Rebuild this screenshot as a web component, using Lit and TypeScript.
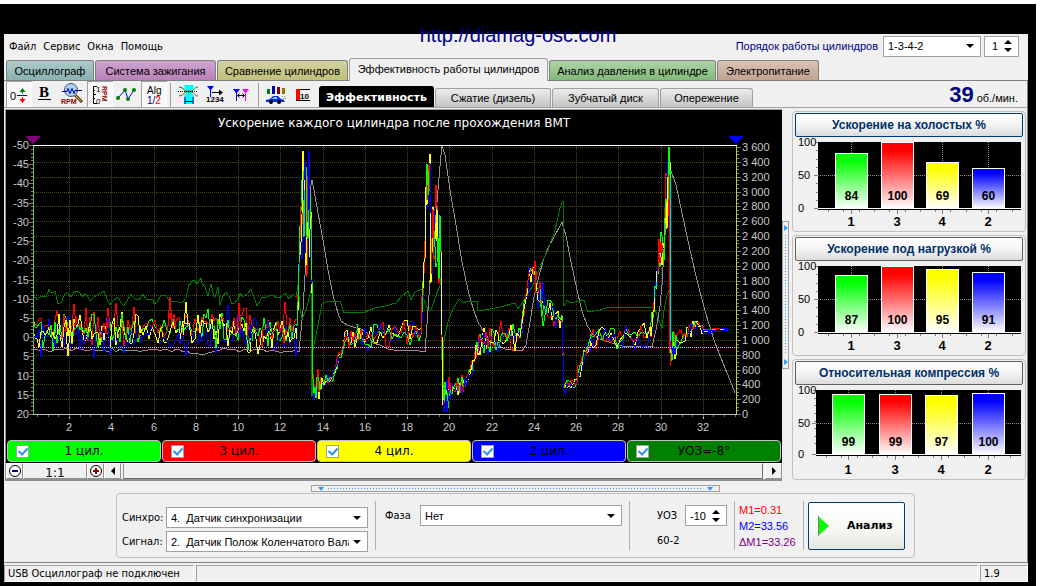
import { LitElement, html, svg, css } from "lit";
import { customElement, property, state } from "lit/decorators.js";
import { classMap } from "lit/directives/class-map.js";

type Pt = [number, number];

/* ---------- chart geometry ---------- */
const TOP = 145;
const BOTTOM = 414;
const xOf = (v: number) => Math.round(69 + (v - 2) * 21.13);
const yLeft = (v: number) => Math.round(TOP + ((v + 50) * (BOTTOM - TOP)) / 70);
const yRight = (v: number) => Math.round(BOTTOM - (v / 200) * 14.83);

const range = (from: number, to: number, step: number) => {
  const out: number[] = [];
  for (let v = from; v <= to; v += step) out.push(v);
  return out;
};

function random(seed: number) {
  let s = seed;
  return () => {
    s = (s * 1664525 + 1013904223) % 4294967296;
    return s / 4294967296;
  };
}

/* Section of a cylinder trace: x from, x to, y at start, y at end, ripple, spacing */
type Section = [number, number, number, number, number, number];
const cylinder: Section[] = [
  [33, 60, 331, 331, 15, 2],
  [60, 140, 330, 330, 17, 2],
  [140, 180, 332, 331, 10, 3],
  [180, 200, 330, 327, 12, 3],
  [200, 262, 328, 331, 16, 2],
  [262, 296, 335, 334, 14, 2],
  [297, 300, 325, 240, 12, 1],
  [301, 311, 205, 215, 48, 1],
  [312, 313, 285, 380, 8, 1],
  [314, 321, 386, 385, 11, 1],
  [322, 332, 383, 378, 5, 2],
  [333, 344, 374, 345, 7, 2],
  [345, 362, 338, 336, 10, 2],
  [362, 420, 338, 331, 11, 3],
  [421, 425, 330, 250, 14, 1],
  [426, 430, 195, 175, 18, 1],
  [431, 440, 242, 235, 42, 1],
  [441, 442, 250, 340, 8, 1],
  [443, 452, 396, 390, 14, 1],
  [453, 465, 388, 384, 7, 1],
  [466, 471, 380, 372, 4, 2],
  [472, 479, 365, 345, 8, 1],
  [480, 498, 341, 337, 13, 2],
  [499, 519, 336, 338, 11, 2],
  [520, 528, 336, 288, 8, 2],
  [529, 535, 276, 270, 9, 2],
  [536, 545, 288, 303, 14, 2],
  [546, 562, 312, 324, 12, 2],
  [563, 564, 350, 386, 4, 1],
  [565, 577, 386, 381, 5, 2],
  [578, 590, 374, 344, 8, 2],
  [590, 650, 338, 334, 11, 3],
  [651, 658, 332, 270, 10, 1],
  [659, 664, 252, 248, 14, 1],
  [665, 668, 210, 195, 34, 1],
  [669, 670, 178, 174, 16, 1],
  [671, 676, 347, 347, 16, 1],
  [677, 697, 340, 325, 7, 2],
  [698, 703, 325, 330, 4, 2],
  [704, 730, 331, 329, 1, 4],
];

function cylinderTrace(seed: number, bias: number): Pt[] {
  const rnd = random(seed);
  const pts: Pt[] = [];
  for (const [x0, x1, y0, y1, ripple, step] of cylinder) {
    const quiet = ripple > 9 && ripple < 18 && x1 < 300 ? bias : bias / 4;
    for (let x = x0; x <= x1; x += step) {
      const t = x1 === x0 ? 0 : (x - x0) / (x1 - x0);
      const swing = (rnd() + rnd() - 1) * ripple * 1.45;
      pts.push([x, Math.round(y0 + (y1 - y0) * t + swing + quiet)]);
    }
  }
  return pts;
}

const join = (pts: Pt[]) => pts.map((p) => p.join(",")).join(" ");

function ripplePath(seed: number, amp: number, until: number, nodes: Pt[]): string {
  const rnd = random(seed);
  const pts: Pt[] = [];
  nodes.forEach(([x, y], i) => {
    pts.push([x, y]);
    const next = nodes[i + 1];
    if (next && x < until) {
      for (let k = x + 3; k < Math.min(next[0], until); k += 4) {
        const t = (k - x) / (next[0] - x);
        pts.push([k, Math.round(y + (next[1] - y) * t + (rnd() - 0.5) * amp)]);
      }
    }
  });
  return join(pts);
}

const speedTrace = ripplePath(5, 4, 299, [
  [33, 350], [180, 350], [190, 353], [205, 354], [220, 350], [299, 352], [303, 310], [305, 275],
  [307, 235], [309, 210], [311, 185], [312, 180], [314, 190], [318, 213], [323, 240], [328, 270],
  [333, 295], [338, 313], [341, 321], [347, 325], [353, 327], [361, 329], [367, 333], [373, 343],
  [380, 345], [388, 349], [400, 351], [412, 350], [425, 352], [428, 310], [430, 280], [432, 250],
  [436, 215], [438, 190], [441, 155], [442, 146], [445, 155], [450, 190], [456, 225], [462, 262],
  [468, 290], [473, 308], [478, 322], [484, 332], [490, 341], [496, 345], [505, 349], [522, 351],
  [526, 345], [530, 322], [534, 297], [538, 280], [543, 261], [548, 248], [554, 237], [560, 226],
  [562, 222], [566, 236], [571, 262], [577, 290], [582, 311], [587, 325], [593, 335], [600, 339],
  [612, 343], [625, 347], [640, 346], [652, 347], [656, 330], [660, 306], [662, 285], [664, 250],
  [667, 205], [669, 165], [676, 185], [685, 227], [695, 272], [705, 311], [715, 343], [725, 368],
  [730, 380], [735, 393],
]);

const angleTrace = ripplePath(11, 9, 296, [
  [33, 297], [37, 300], [46, 297], [50, 292], [55, 291], [58, 304], [64, 296], [84, 294], [90, 301],
  [104, 291], [110, 305], [118, 297], [124, 306], [132, 296], [146, 299], [154, 304], [166, 295],
  [175, 301], [186, 298], [190, 285], [194, 280], [202, 283], [208, 296], [211, 284], [215, 297],
  [218, 287], [220, 305], [226, 292], [232, 304], [240, 293], [252, 292], [257, 306], [262, 297],
  [296, 297], [298, 285], [300, 308], [302, 319], [306, 310], [309, 298], [311, 290], [312, 397],
  [313, 350], [315, 340], [319, 320], [322, 304], [326, 302], [340, 301], [344, 313], [365, 312],
  [375, 308], [385, 306], [396, 303], [402, 296], [408, 291], [411, 300], [415, 292], [422, 289],
  [424, 300], [428, 310], [431, 310], [436, 296], [440, 285], [441, 278], [442, 360], [443, 395],
  [444, 340], [448, 322], [453, 309], [459, 299], [463, 303], [468, 301], [477, 301], [478, 311],
  [490, 309], [500, 307], [515, 303], [518, 309], [525, 299], [533, 285], [537, 275], [542, 262],
  [548, 250], [555, 230], [560, 208], [563, 201], [564, 306], [567, 300], [571, 303], [584, 300],
  [588, 312], [600, 310], [610, 307], [654, 307], [658, 318], [662, 328], [664, 310], [667, 295],
  [670, 288], [671, 350],
]);

/* Single bursts that rise above the general ripple of each cylinder */
interface Trace { color: string; points: string; }
const bursts: Trace[] = [
  { color: "#ff0000", points: "72,325 74,304 76,326" },
  { color: "#ff0000", points: "106,326 108,308 110,326" },
  { color: "#ff0000", points: "168,326 170,297 172,322 174,314 176,330" },
  { color: "#ff0000", points: "237,330 239,303 241,330" },
  { color: "#ff0000", points: "283,326 285,302 287,326" },
  { color: "#ffff00", points: "183,335 186,302 188,325" },
  { color: "#0000ff", points: "225,330 228,305 230,326" },
  { color: "#0000ff", points: "183,335 186,356 189,340" },
  { color: "#ffff00", points: "66,332 68,356 70,330" },
  { color: "#00ff00", points: "302,190 304,170 306,200" },
  { color: "#ffff00", points: "302,210 303,151 305,190" },
  { color: "#0000ff", points: "303,200 305,160 306,240" },
  { color: "#ff0000", points: "427,200 429,165 430,190" },
  { color: "#00ff00", points: "426,200 428,170 429,195" },
  { color: "#0000ff", points: "443,400 444,412 446,395 447,412 449,390" },
  { color: "#ff0000", points: "533,275 535,261 537,280" },
  { color: "#00ff00", points: "540,298 543,326 546,310" },
  { color: "#0000ff", points: "541,300 543,282 545,306" },
  { color: "#ff0000", points: "668,180 669,155 669,340 671,366" },
  { color: "#00ff00", points: "668,200 669,147 670,175" },
  { color: "#0000ff", points: "671,180 671,350" },
  { color: "#0000ff", points: "704,331 716,330 724,328 731,330" },
];

/* Cylinder traces are cut into short runs so that no colour hides the others */
function interleaved(): Trace[] {
  const rnd = random(99);
  const runs: (Trace & { order: number })[] = [];
  const sources: [string, Pt[]][] = [
    ["#00ff00", cylinderTrace(31, -1)],
    ["#ff0000", cylinderTrace(77, -6)],
    ["#0000ff", cylinderTrace(512, 5)],
    ["#ffff00", cylinderTrace(2024, 1)],
  ];
  for (const [color, pts] of sources) {
    let i = 0;
    while (i < pts.length - 1) {
      const n = 2 + Math.floor(rnd() * 4);
      runs.push({ color, points: join(pts.slice(i, i + n + 1)), order: rnd() });
      i += n;
    }
  }
  return runs.sort((a, b) => a.order - b.order);
}

const traces: Trace[] = [
  ...interleaved(),
  ...bursts,
];

/* ---------- toolbar pictures ---------- */
const icons = {
  offset: svg`
    <text class="i11" x="4" y="19">0</text>
    <path d="M11 14.5H21" stroke="#0000c0" />
    <path d="M16.5 13V9" stroke="#008000" /><path d="M13.5 11h6l-3-4z" fill="#008000" />
    <path d="M16.5 16v4" stroke="#f00" /><path d="M13.5 18h6l-3 4z" fill="#f00" />`,
  bold: svg`
    <text class="bserif" x="6" y="16">B</text>
    <path d="M5 18.5H18" stroke="#000" />`,
  magnifier: svg`
    <path d="M15 14l7 7" stroke="#604010" stroke-width="3" />
    <path d="M15 14l6 6" stroke="#e0b040" />
    <circle cx="11" cy="9" r="6.5" fill="#a8d0f8" stroke="#505860" />
    <path d="M2 10.5h5l1-3 2 5 2-5 2 5 1-3h7" fill="none" stroke="#000090" />
    <text class="rpm" x="1" y="23">RPM</text>`,
  scale: svg`
    <path d="M10 5.5H6.500V22.500H10M6 9.500h2M6 13.500h3M6 17.500h2" fill="none" stroke="#000" />
    <text class="i8" x="9" y="11">1</text><text class="i8" x="9" y="23">0</text>
    <text class="rpm" transform="translate(15 5) rotate(90)" x="0" y="0">RPM</text>`,
  points: svg`
    <path d="M4 17L11 9L14 18L20 9" fill="none" stroke="#0000ff" />
    <g fill="#008000"><circle cx="4" cy="17" r="2" /><circle cx="11" cy="9" r="2" /><circle cx="14" cy="18" r="2" /><circle cx="20" cy="9" r="2" /></g>`,
  algorithm: svg`
    <text class="i10" x="6" y="13">Alg</text>
    <text class="i10" x="6" y="23"><tspan fill="#000080">1/</tspan><tspan fill="#f00">2</tspan></text>`,
  goblet: svg`
    <path d="M9 4h10l-2 8 2 3v8H9v-8l2-3z" fill="#00ffff" />
    <path d="M4 6c5 0 5 5 10 5s5-5 9-5" fill="none" stroke="#008000" />
    <path d="M4 15c5 0 5-5 10-5s5 5 9 5" fill="none" stroke="#c04000" />
    <path d="M3 10.5h20" stroke="#000" stroke-dasharray="1 1" />
    <path d="M10 16v7M18 16v7M10 20.500h8" fill="none" stroke="#0000a0" />`,
  markerNumbers: svg`
    <path d="M5 5h7l-3 4v7h-1v-7z" fill="#0000ff" />
    <path d="M10 11.500h8" stroke="#000" /><path d="M17 8.500l4 3-4 3z" fill="#000" />
    <text class="i8b" x="4" y="21">1234</text>`,
  markerPair: svg`
    <path d="M4 8h7l-3 4v8h-1v-8z" fill="#0000ff" />
    <path d="M13 8h7l-3 4v8h-1v-8z" fill="#ff00ff" />
    <path d="M9 14.500h6M10.500 12.500l-2 2 2 2M13.500 12.500l2 2-2 2" fill="none" stroke="#000" />`,
  carBars: svg`
    <path d="M4 8h3v5H4z" fill="#008000" /><path d="M9 5h3v8H9z" fill="#0000c0" />
    <path d="M14 6h3v7h-3z" fill="#900000" /><path d="M19 7h3v6h-3z" fill="#808000" />
    <path d="M3 19l4-1 3-3h5l3 3 3 1v2H3z" fill="#0030e0" />
    <path d="M9 18l2-2h3v2z" fill="#90d0ff" />
    <circle cx="8" cy="21" r="2" fill="#000" /><circle cx="16" cy="21" r="2" fill="#000" />
    <path d="M19 15.500h4M20 17.500h3M21 20.500h2" stroke="#909090" stroke-dasharray="1 1" />`,
  barTen: svg`
    <path d="M6 8h4v11H6z" fill="#ff0000" /><path d="M10 8.500h10M6 19.500h14" stroke="#000" />
    <text class="i8b" x="10" y="18">10</text>`,
};

@customElement("tool-button")
export class ToolButton extends LitElement {
  @property() icon: keyof typeof icons = "offset";
  @property() name = "";
  @property({ type: Boolean }) pressed = false;

  static styles = css`
    :host { display: block; width: 26px; height: 26px; margin-right: 1px; }
    button { display: block; width: 26px; height: 26px; padding: 0; border: 0; background: none; }
    .pressed {
      background: repeating-conic-gradient(#fff 0 25%, #f0f0f0 0 50%) 0 0 / 2px 2px;
      box-shadow: inset 1px 1px 0 #a0a0a0, inset -1px -1px 0 #fff;
    }
    svg { display: block; width: 26px; height: 26px; }
    text { font-family: "Liberation Sans", sans-serif; }
    .i11 { font-size: 11px; }
    .i10 { font-size: 10px; }
    .i8 { font-size: 8px; }
    .i8b { font-size: 8px; font-weight: bold; }
    .rpm { font-size: 7px; font-weight: bold; fill: #900000; }
    .bserif { font: bold 15px "Liberation Serif", serif; }
  `;

  render() {
    return html`<button
      class=${classMap({ pressed: this.pressed })}
      aria-label=${this.name}
      aria-pressed=${this.pressed ? "true" : "false"}
      @click=${() => (this.pressed = !this.pressed)}
    ><svg viewBox="0 0 26 26" aria-hidden="true">${icons[this.icon]}</svg></button>`;
  }
}

/* ---------- bar card ---------- */
interface Bar { id: string; value: number; color: string; }

@customElement("bar-card")
export class BarCard extends LitElement {
  @property() heading = "";
  @property({ type: Boolean }) current = false;
  @property({ attribute: false }) bars: Bar[] = [];
  @property({ type: Number }) origin = 23;
  @property({ type: Number }) floor = 70;

  static styles = css`
    :host { display: block; border: 1px solid #c0c0c0; border-radius: 4px; padding: 1px 2px; }
    button {
      display: block; width: 100%; height: 24px; padding: 0; border: 1px solid #606060; border-radius: 2px;
      background: linear-gradient(#fff, #f4f4f4 50%, #dcdcdc);
      font: bold 12px "Liberation Sans", sans-serif; color: #003068;
    }
    .current { border-color: #003c74; }
    svg { display: block; width: 100%; height: auto; overflow: visible; }
    text { font-family: "Liberation Sans", sans-serif; }
    .tick { font-size: 11px; fill: #000; }
    .num { font-size: 12px; font-weight: bold; text-anchor: middle; }
    .id { font-size: 13px; font-weight: bold; text-anchor: middle; }
    .crisp { shape-rendering: crispEdges; }
  `;

  render() {
    const x0 = this.origin;
    const base = this.floor;
    const full = base === 70 ? 66 : 61;
    const step = (226 - x0) / (base === 70 ? 4.45 : 4.39);
    const cx = (i: number) => Math.round(193 - step * (3 - i));
    const mid = base - 33 + (base === 70 ? 0 : 2);
    return html`
      <button class=${classMap({ current: this.current })}>${this.heading}</button>
      <svg viewBox="0 -1 228 93" role="img" aria-label=${this.heading}>
        <defs>
          ${this.bars.map((b) => svg`<linearGradient id="g${b.id}" x1="0" y1="0" x2="0" y2="1">
            <stop offset="0.12" stop-color=${b.color} /><stop offset="1" stop-color="#fff" /></linearGradient>`)}
        </defs>
        <g class="crisp">
          <rect x=${x0} y="4" width=${226 - x0} height=${base - 2} fill="#000" />
          <path d="M${x0 - 3} 4.500h3M${x0 - 4} ${mid + 0.5}h4M${x0 - 4} ${base + 0.5}h4" stroke="#808080" />
          ${range(1, 7, 1).map((i) => svg`<path d="M${x0 - 2} ${Math.round(4 + (i * full) / 8) + 0.5}h2" stroke="#808080" />`)}
          ${range(0, 12, 1).map((i) => svg`<path d="M${Math.round(x0 + 10 + i * 15.3) + 0.5} ${base + 2}v2" stroke="#808080" />`)}
          <path d="M${x0} ${mid + 0.5}H226" stroke="#909090" stroke-dasharray="1 1" />
          ${this.bars.map((b, i) => svg`
            <path d="M${cx(i) + 0.5} 4V${base}" stroke="#909090" stroke-dasharray="1 1" />
            <path d="M${cx(i) + 0.5} ${base + 2}v4" stroke="#808080" />
            <rect x=${cx(i) - 15.5} y=${base - Math.round((b.value * full) / 100) + 0.5} width="32"
              height=${Math.round((b.value * full) / 100)} fill="url(#g${b.id})" stroke="#fff" />`)}
          <path d="M${x0} ${base + 0.5}H226" stroke="#fff" />
        </g>
        ${this.bars.map((b, i) => svg`
          <text class="num" x=${cx(i) + 0.5} y=${base - 8}>${b.value}</text>
          <text class="id" x=${cx(i)} y="88">${b.id}</text>`)}
        <text class="tick" x="3" y="8">100</text>
        <text class="tick" x="3" y=${mid + 4}>50</text>
        <text class="tick" x="3" y=${base + 4}>0</text>
      </svg>`;
  }
}

/* ---------- oscillogram ---------- */
@customElement("scope-chart")
export class ScopeChart extends LitElement {
  static styles = css`
    :host { display: block; background: #000; }
    svg { display: block; width: 100%; height: auto; }
    text { font-family: "Liberation Sans", sans-serif; font-size: 11px; fill: #c8c8c8; }
    .title { font-family: "DejaVu Sans", sans-serif; font-size: 12px; fill: #fff; text-anchor: middle; }
    .end { text-anchor: end; }
    .mid { text-anchor: middle; font-size: 11px; }
    .crisp { shape-rendering: crispEdges; fill: none; }
  `;

  render() {
    return html`<svg viewBox="6 110 776 330" role="img" aria-label="Ускорение каждого цилиндра">
      <text class="title" x="394" y="127">Ускорение каждого цилиндра после прохождения ВМТ</text>
      <g class="crisp">
        ${range(200, 3600, 200).map((v) => svg`<path d="M34 ${yRight(v) + 0.5}H736" stroke="#4a4a10" stroke-dasharray="1 1" />`)}
        ${range(2, 32, 2).map((v) => svg`<path d="M${xOf(v) + 0.5} 146V414" stroke="#4a4a10" stroke-dasharray="1 1" />
          <path d="M${xOf(v) + 0.5} 414v5" stroke="#c0c0c0" />`)}
        ${range(0.5, 33.5, 0.5).map((v) => svg`<path d="M${xOf(v) + 0.5} 414v3" stroke="#707070" />`)}
        ${range(-50, 20, 1).map((v) => svg`<path d="M${v % 5 ? 31 : 29} ${yLeft(v) + 0.5}H33" stroke="#808080" />`)}
        ${range(0, 3600, 50).map((v) => svg`<path d="M737 ${yRight(v) + 0.5}h${v % 200 ? 2 : 4}" stroke="#808080" />`)}
        <polyline points=${speedTrace} stroke="#909090" />
        <polyline points=${angleTrace} stroke="#007a00" />
        ${traces.map((t) => svg`<polyline points=${t.points} stroke=${t.color} />`)}
        <path d="M34 347.500H736" stroke="#40ffff" stroke-dasharray="1 1" />
        <path d="M33 145.500H737" stroke="#fff" />
        <path d="M33 414.500H737" stroke="#c0c0c0" />
        <path d="M33.500 146V414" stroke="#60c060" />
        <path d="M736.500 146V414" stroke="#c8c840" />
      </g>
      <path d="M25 136h16l-8 8z" fill="#800080" />
      <path d="M728 136h16l-8 8z" fill="#0000ff" />
      ${range(-50, 20, 5).map((v) => svg`<text class="end" x="29" y=${yLeft(v) + 4}>${v}</text>`)}
      ${range(0, 3600, 200).map((v) => svg`<text x="742" y=${yRight(v) + 4}>${v < 1000 ? v : `${Math.floor(v / 1000)} ${String(v % 1000).padStart(3, "0")}`}</text>`)}
      ${range(2, 32, 2).map((v) => svg`<text class="mid" x=${xOf(v)} y="431">${v}</text>`)}
    </svg>`;
  }
}

/* ---------- application ---------- */
const downArrow = html`<svg class="arrow" viewBox="0 0 16 16" aria-hidden="true"><path d="M4 6h8l-4 4z" /></svg>`;
const spinArrows = html`<svg class="arrow" viewBox="0 0 16 16" aria-hidden="true"><path d="M4 6h8L8 2zM4 10h8l-4 4z" /></svg>`;

@customElement("app-root")
export class AppRoot extends LitElement {
  @state() private tab = 3;
  @state() private mode = 0;

  private tabs = ["Осциллограф", "Система зажигания", "Сравнение цилиндров", "Эффективность работы цилиндров", "Анализ давления в цилиндре", "Электропитание"];
  private modes = ["Эффективность", "Сжатие (дизель)", "Зубчатый диск", "Опережение"];
  private channels = [
    { text: "1 цил.", tone: "green" },
    { text: "3 цил.", tone: "red" },
    { text: "4 цил.", tone: "yellow" },
    { text: "2 цил.", tone: "blue" },
    { text: "УОЗ=-8°", tone: "dark" },
  ];

  private bars(a: number, b: number, c: number, d: number): Bar[] {
    return [
      { id: "1", value: a, color: "#00ff00" },
      { id: "3", value: b, color: "#ff0000" },
      { id: "4", value: c, color: "#ffff00" },
      { id: "2", value: d, color: "#0000ff" },
    ];
  }

  static styles = css`
    :host {
      display: flex; flex-direction: column; box-sizing: border-box; min-height: 100vh;
      padding: 4px 4px 0 0; background: #fff; color: #000;
      font: 11px "DejaVu Sans Condensed", "DejaVu Sans", sans-serif;
    }
    * { box-sizing: border-box; }
    button, input, select { font: inherit; color: inherit; margin: 0; }
    .frame { flex: 1; display: flex; flex-direction: column; background: #000; padding: 30px 8px 4px 4px; }
    .window { flex: 1; display: flex; flex-direction: column; background: #f0f0f0; position: relative; }
    .ms { font: 11px "Liberation Sans", sans-serif; }

    .head { display: flex; align-items: center; height: 24px; padding: 0 9px 0 5px; }
    .menu { display: flex; gap: 7px; flex: 1; }
    .menu button { border: 0; background: none; padding: 0; }
    .site {
      position: absolute; top: -11px; left: 0; right: 0; margin: 0 auto; width: max-content; padding-left: 4px;
      font: 20px/24px "Liberation Sans", sans-serif; color: #000080; text-decoration: none;
    }
    .order { color: #000080; margin-right: 5px; }
    .field { display: grid; background: #fff; border: 1px solid #a0a0a0; height: 21px; align-items: center; }
    .field > * { grid-area: 1 / 1; }
    .field select, .field input {
      appearance: none; -moz-appearance: textfield; border: 0; background: none; outline: 0;
      width: 100%; height: 19px; padding: 0 18px 0 4px; min-width: 0;
    }
    input::-webkit-inner-spin-button { appearance: none; }
    .arrow { width: 16px; height: 16px; justify-self: end; margin-right: 2px; pointer-events: none; }
    .cyl { width: 98px; margin-right: 3px; }
    .num { width: 35px; }
    .num input { padding: 0 0 0 7px; }

    .tabs { display: flex; align-items: flex-end; gap: 1px; height: 23px; padding-left: 2px; border-bottom: 1px solid #808080; }
    .tab {
      height: 20px; padding: 0; border: 1px solid #808080; border-bottom: 0; border-radius: 3px 3px 0 0;
      text-align: center; white-space: nowrap;
    }
    .tab.active { height: 23px; margin-bottom: -1px; background: #f0f0f0; border-color: #a0a0a0; padding-bottom: 3px; }
    .t0 { width: 88px; background: linear-gradient(#abcac8, #88b1b1); }
    .t1 { width: 121px; background: linear-gradient(#cda4cf, #b980b9); }
    .t2 { width: 131px; background: linear-gradient(#d2d2a2, #c0c078); }
    .t3 { width: 199px; background: #e0e0e0; }
    .t4 { width: 167px; background: linear-gradient(#aed4a8, #80ba78); }
    .t5 { width: 102px; background: linear-gradient(#d9c3b5, #c3a28f); }

    .page { flex: 1; display: flex; flex-direction: column; border-right: 1px solid #808080; border-bottom: 1px solid #808080; }
    .tools { display: flex; height: 27px; padding-left: 2px; border-bottom: 1px solid #a0a0a0; }
    .sep { width: 1px; height: 24px; margin: 2px 4px 0 2px; background: #a0a0a0; }
    .modes { display: flex; align-items: flex-end; gap: 1px; margin-left: 2px; flex: 1; }
    .mode {
      height: 19px; padding: 0; border: 1px solid #a0a0a0; border-bottom: 0; border-radius: 3px 3px 0 0;
      background: linear-gradient(#ececec, #c4c4c4); white-space: nowrap;
    }
    .mode.active { height: 21px; background: #000; color: #fff; border-color: #000; font: bold 11px "DejaVu Sans", sans-serif; }
    .m0 { width: 115px; } .m1 { width: 116px; } .m2 { width: 107px; } .m3 { width: 93px; }
    .speed { display: flex; align-items: baseline; gap: 3px; padding-right: 9px; }
    .speed b { font: bold 22px/27px "Liberation Sans", sans-serif; color: #000080; }

    .main { display: grid; grid-template-columns: minmax(0, 1fr) 10px 234px; align-items: start; padding: 1px 1px 0 1px; }
    .scope { border-left: 1px solid #909090; border-top: 1px solid #a0a0a0; background: #000; }
    .legend { display: grid; grid-template-columns: repeat(5, minmax(0, 1fr)); gap: 1px; padding: 0 1px; margin-bottom: 1px; }
    .channel {
      display: grid; grid-template-columns: 13px 1fr 13px; align-items: center; height: 22px; padding: 0 8px;
      border: 1px solid #c0c0c0; border-radius: 4px; text-align: center; font: 12px "DejaVu Sans", sans-serif;
    }
    .green { background: #00ff00; } .red { background: #ff0000; } .yellow { background: #ffff00; }
    .blue { background: #0000ff; } .dark { background: #008000; }
    .channel input { appearance: none; width: 13px; height: 13px; background: #fff; border: 1px solid #a0a0a0; display: grid; }
    .channel input:checked::before {
      content: ""; width: 4px; height: 7px; margin: 0 0 0 3px; border: solid #3090f0; border-width: 0 2px 2px 0; transform: rotate(42deg);
    }
    .scroll { display: flex; height: 18px; background: #f0f0f0; border-bottom: 2px solid #909090; }
    .scroll button, .zoom {
      height: 16px; padding: 0; background: #f0f0f0; border: 1px solid; border-color: #fff #909090 #909090 #fff;
    }
    .scroll button { width: 17px; display: grid; place-items: center; }
    .scroll button svg { width: 14px; height: 14px; }
    .zoom { width: 64px; text-align: center; font: 12px/18px "DejaVu Sans", sans-serif; }
    .track { flex: 1; margin: 0 2px; border: 1px solid; border-color: #fff #707070 #707070 #909090; }
    .side { display: flex; align-items: center; align-self: stretch; }
    .vgrip {
      width: 7px; height: 148px; padding: 3px 0; border: 1px solid #a0a0a0; background: #f0f0f0;
      display: flex; flex-direction: column; align-items: center; justify-content: space-between;
    }
    .vgrip i { flex: 1; width: 1px; margin: 4px 0; background: repeating-linear-gradient(#3399ff 0 1px, transparent 1px 3px); }
    .vgrip svg { width: 4px; height: 6px; }
    .cards { display: flex; flex-direction: column; gap: 3px; padding-top: 2px; }

    .hgrip {
      width: 409px; height: 7px; margin: 4px auto 1px; padding: 0 6px; border: 1px solid #a0a0a0; background: #f0f0f0;
      display: flex; align-items: center;
    }
    .hgrip i { flex: 1; height: 1px; margin: 0 4px; background: repeating-linear-gradient(90deg, #3399ff 0 1px, transparent 1px 3px); }
    .hgrip svg { width: 6px; height: 4px; }
    .controls {
      display: flex; align-items: center; align-self: center; height: 65px; padding: 0 9px 0 5px;
      border: 1px solid #c0c0c0; border-radius: 4px;
    }
    .line { width: 1px; height: 49px; background: #b0b0b0; }
    .inputs { display: grid; grid-template-columns: 44px 202px; row-gap: 3px; align-items: center; padding-top: 8px; margin-right: 7px; }
    .phase { display: grid; grid-template-columns: 35px 202px; align-items: center; align-self: flex-start; margin: 11px 7px 0 9px; }
    .angle { display: grid; grid-template-columns: 28px 42px; align-items: center; row-gap: 8px; align-self: flex-start; margin: 11px 7px 0 27px; }
    .angle .num { width: 42px; }
    .angle .num input { padding-left: 4px; }
    .marks { width: 68px; padding-left: 4px; line-height: 16px; }
    .mr { color: #ff0000; } .mb { color: #0000ff; } .mp { color: #800080; }
    .run {
      display: flex; align-items: center; width: 97px; height: 48px; margin-left: 4px; padding: 0 0 0 9px; gap: 18px;
      border: 1px solid #003c74; border-radius: 2px; background: linear-gradient(#fff, #f6f6f2 60%, #e4e4e0);
      font: bold 11px "DejaVu Sans", sans-serif;
    }
    .run svg { width: 11px; height: 20px; }

    .status { display: flex; gap: 2px; height: 19px; padding-top: 2px; }
    .status div { border: 1px solid; border-color: #a0a0a0 #fff #fff #a0a0a0; padding-left: 3px; line-height: 15px; white-space: nowrap; }
    .s0 { width: 190px; } .s1 { flex: 1; } .s2 { width: 48px; }
  `;

  render() {
    return html`
      <div class="frame"><div class="window">
        <header class="head">
          <nav class="menu">${["Файл", "Сервис", "Окна", "Помощь"].map((m) => html`<button>${m}</button>`)}</nav>
          <label class="order ms" for="order">Порядок работы цилиндров</label>
          <span class="field cyl ms"><select id="order"><option>1-3-4-2</option></select>${downArrow}</span>
          <span class="field num ms"><input type="number" value="1" aria-label="Номер цилиндра" />${spinArrows}</span>
        </header>
        <a class="site" href="http://diamag-osc.com">http://diamag-osc.com</a>
        <div class="tabs" role="tablist">
          ${this.tabs.map((t, i) => html`<button role="tab" aria-selected=${i === this.tab}
            class=${classMap({ tab: true, ms: true, [`t${i}`]: true, active: i === this.tab })}
            @click=${() => (this.tab = i)}>${t}</button>`)}
        </div>
        <section class="page">
          <div class="tools">
            <tool-button icon="offset" name="Смещение" pressed></tool-button>
            <tool-button icon="bold" name="Толщина"></tool-button>
            <tool-button icon="magnifier" name="Обороты"></tool-button>
            <tool-button icon="scale" name="Шкала" pressed></tool-button>
            <tool-button icon="points" name="Точки"></tool-button>
            <tool-button icon="algorithm" name="Алгоритм" pressed></tool-button>
            <span class="sep"></span>
            <tool-button icon="goblet" name="Фазы"></tool-button>
            <tool-button icon="markerNumbers" name="Маркер"></tool-button>
            <tool-button icon="markerPair" name="Маркеры"></tool-button>
            <span class="sep"></span>
            <tool-button icon="carBars" name="Автомобиль"></tool-button>
            <tool-button icon="barTen" name="Столбцы"></tool-button>
            <div class="modes" role="tablist">
              ${this.modes.map((t, i) => html`<button role="tab" aria-selected=${i === this.mode}
                class=${classMap({ mode: true, ms: true, [`m${i}`]: true, active: i === this.mode })}
                @click=${() => (this.mode = i)}>${t}</button>`)}
            </div>
            <div class="speed ms"><b>39</b><span>об./мин.</span></div>
          </div>
          <div class="main">
            <div class="scope">
              <scope-chart></scope-chart>
              <div class="legend">
                ${this.channels.map((c) => html`<label class="channel ${c.tone}"><input type="checkbox" checked /><span>${c.text}</span></label>`)}
              </div>
              <div class="scroll">
                <button aria-label="Уменьшить"><svg viewBox="0 0 14 14"><circle cx="7" cy="7" r="5.500" fill="#fff" stroke="#000" /><path d="M4 7h6" stroke="#000080" stroke-width="2" /></svg></button>
                <div class="zoom">1:1</div>
                <button aria-label="Увеличить"><svg viewBox="0 0 14 14"><circle cx="7" cy="7" r="5.500" fill="#fff" stroke="#000" /><path d="M4 7h6M7 4v6" stroke="#900000" stroke-width="2" /></svg></button>
                <button aria-label="Влево"><svg viewBox="0 0 14 14"><path d="M9 3v8L5 7z" /></svg></button>
                <div class="track"></div>
                <button aria-label="Вправо"><svg viewBox="0 0 14 14"><path d="M5 3v8l4-4z" /></svg></button>
              </div>
            </div>
            <div class="side"><div class="vgrip">
              <svg viewBox="0 0 4 6"><path d="M0 0v6l4-3z" fill="#3399ff" /></svg><i></i>
              <svg viewBox="0 0 4 6"><path d="M0 0v6l4-3z" fill="#3399ff" /></svg>
            </div></div>
            <div class="cards">
              <bar-card current heading="Ускорение на холостых %" .bars=${this.bars(84, 100, 69, 60)}></bar-card>
              <bar-card heading="Ускорение под нагрузкой %" .bars=${this.bars(87, 100, 95, 91)}></bar-card>
              <bar-card heading="Относительная компрессия %" origin="21" floor="68" .bars=${this.bars(99, 99, 97, 100)}></bar-card>
            </div>
          </div>
          <div class="hgrip">
            <svg viewBox="0 0 6 4"><path d="M0 0h6l-3 4z" fill="#3399ff" /></svg><i></i>
            <svg viewBox="0 0 6 4"><path d="M0 0h6l-3 4z" fill="#3399ff" /></svg>
          </div>
          <div class="controls">
            <div class="inputs">
              <label for="sync">Синхро:</label>
              <span class="field ms"><select id="sync"><option>4.&nbsp; Датчик синхронизации</option></select>${downArrow}</span>
              <label for="signal">Сигнал:</label>
              <span class="field ms"><select id="signal"><option>2.&nbsp; Датчик Полож Коленчатого Вала</option></select>${downArrow}</span>
            </div>
            <span class="line"></span>
            <div class="phase">
              <label for="phase">Фаза</label>
              <span class="field ms"><select id="phase"><option>Нет</option></select>${downArrow}</span>
            </div>
            <span class="line"></span>
            <div class="angle">
              <label for="angle">УОЗ</label>
              <span class="field num ms"><input id="angle" type="number" value="-10" />${spinArrows}</span>
              <span>60-2</span>
            </div>
            <span class="line"></span>
            <div class="marks ms"><div class="mr">М1=0.31</div><div class="mb">М2=33.56</div><div class="mp">ΔМ1=33.26</div></div>
            <span class="line"></span>
            <button class="run"><svg viewBox="0 0 11 20"><path d="M0 0v20l11-10z" fill="#00ff00" /><path d="M0.500 0v20" stroke="#808080" /></svg>Анализ</button>
          </div>
        </section>
        <footer class="status">
          <div class="s0">USB Осциллограф не подключен</div><div class="s1"></div><div class="s2">1.9</div>
        </footer>
      </div></div>`;
  }
}
